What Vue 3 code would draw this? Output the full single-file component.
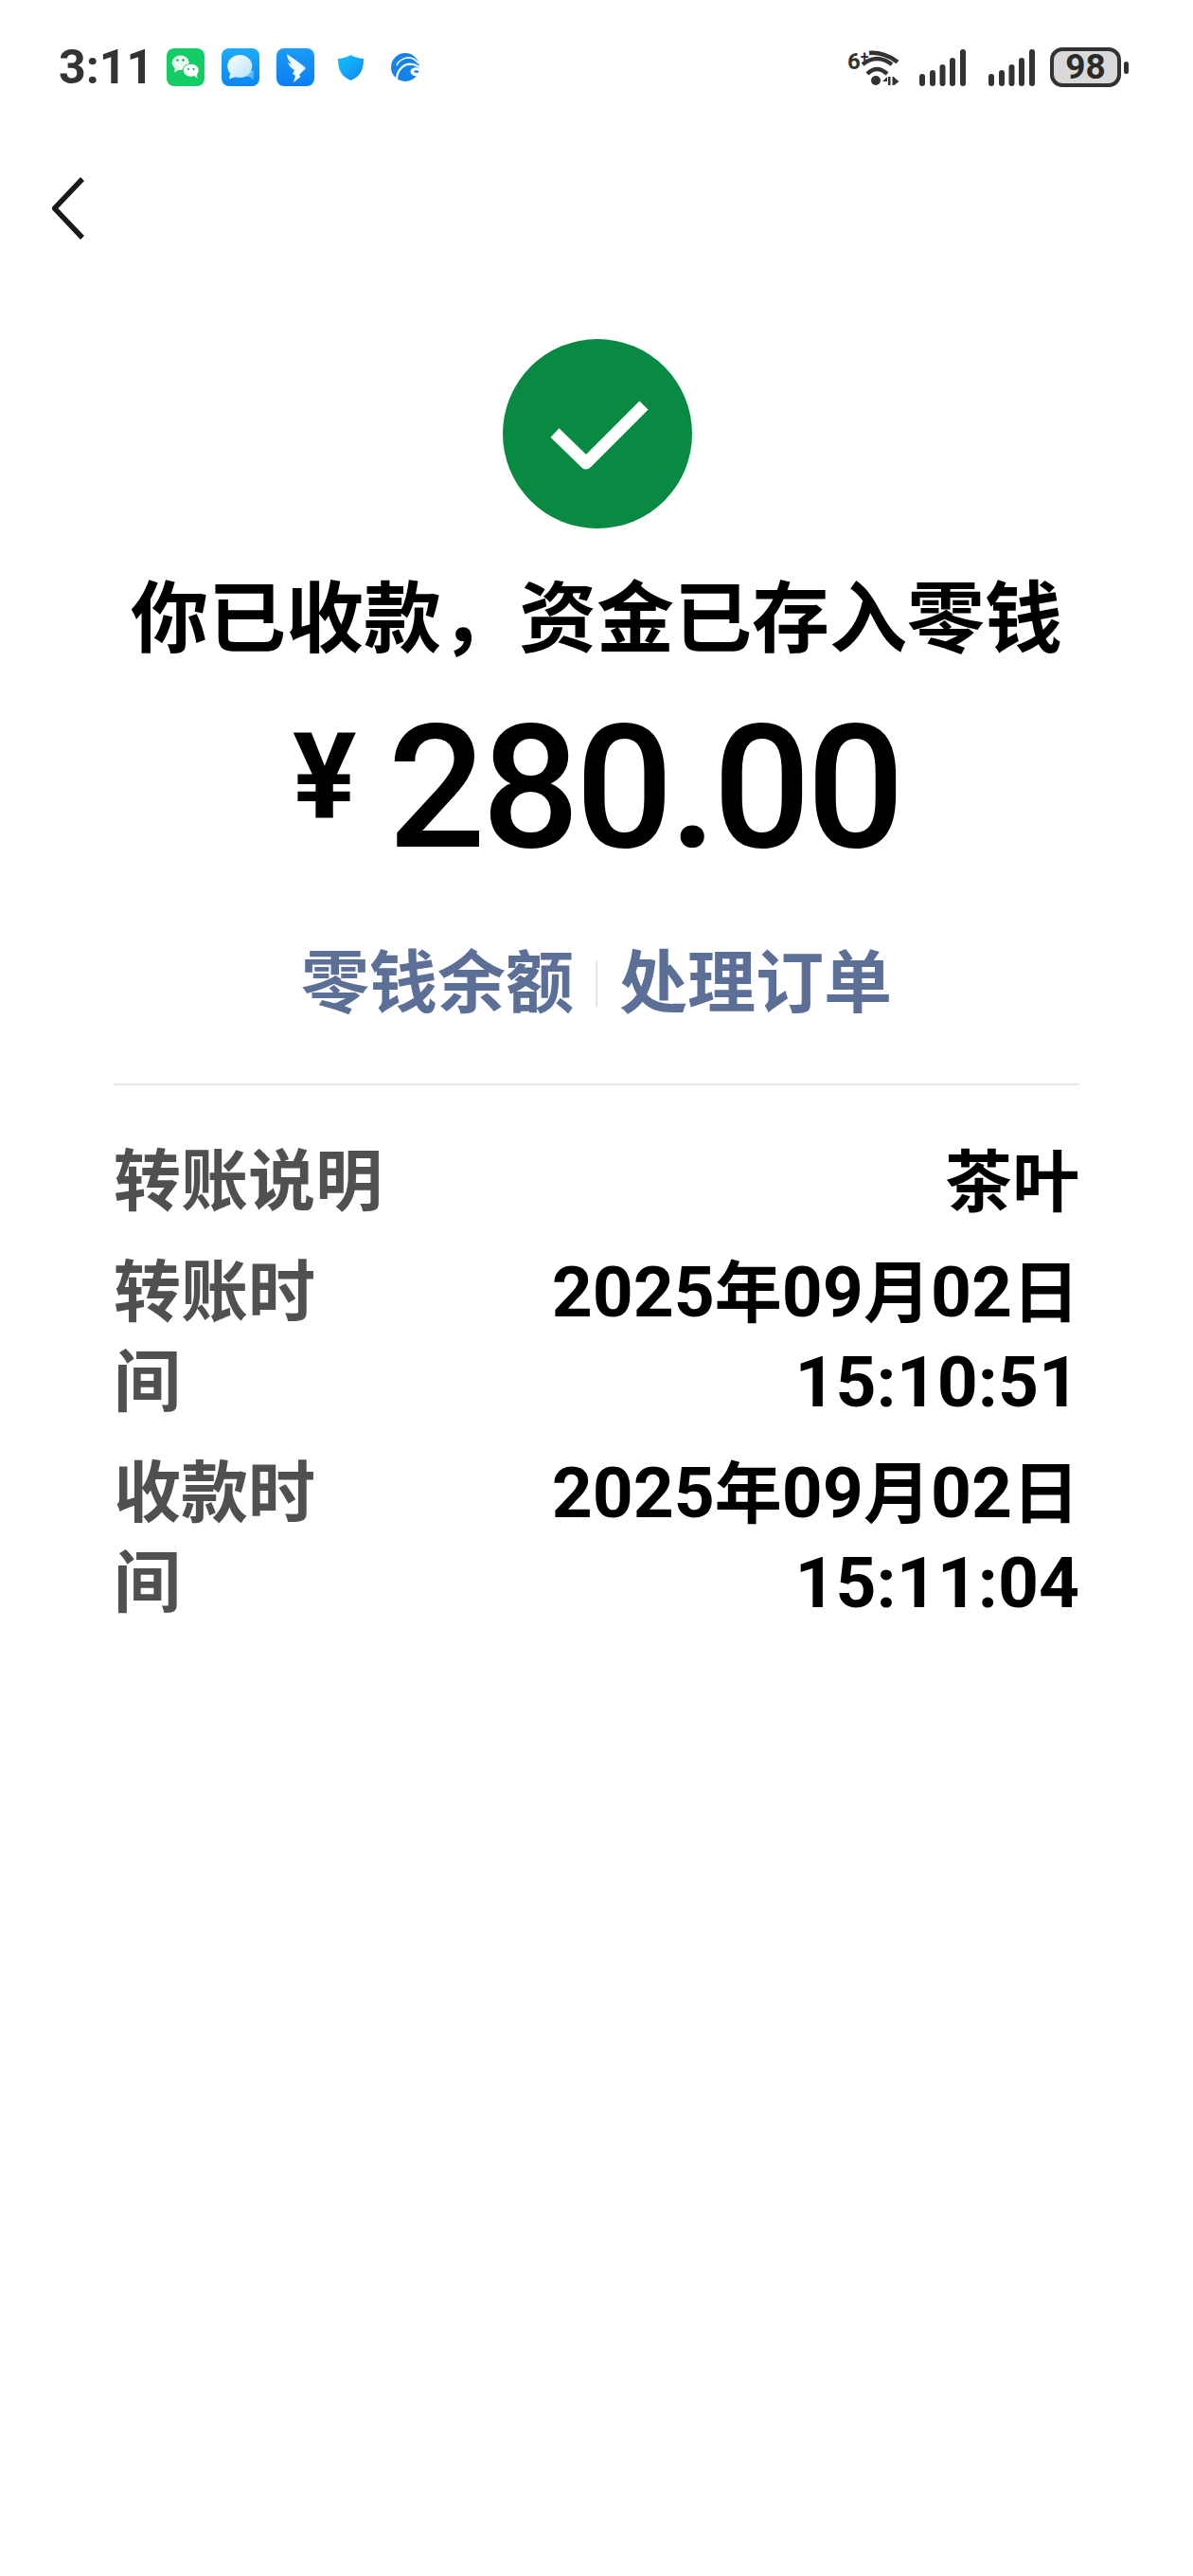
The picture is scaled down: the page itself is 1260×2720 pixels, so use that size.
<script setup>
// digits sit in a larger size than the CJK glyphs on the value side
const splitLine = (line) => line.split(/([\u4e00-\u9fff]+)/).filter(Boolean).map((text) => ({
  text,
  cjk: /[\u4e00-\u9fff]/.test(text)
}))

const rows = [
  { label: '转账说明', lines: ['茶叶'] },
  { label: '转账时\n间', lines: ['2025年09月02日', '15:10:51'] },
  { label: '收款时\n间', lines: ['2025年09月02日', '15:11:04'] }
].map((row) => ({ ...row, lines: row.lines.map(splitLine) }))
</script>

<template>
  <div class="page">
    <div class="status-bar">
      <span class="time">3:11</span>
      <div class="app-icons">
        <svg class="app-icon" viewBox="0 0 40 40">
          <rect width="40" height="40" rx="8" fill="#14cc66" />
          <ellipse cx="14.700" cy="15.300" rx="9" ry="7.800" fill="#e8fbf0" />
          <path d="M9 20l-1 5.500 5.500-3z" fill="#e8fbf0" />
          <ellipse cx="25.700" cy="23.300" rx="8.500" ry="7" fill="#fff" stroke="#14cc66" stroke-width="1" />
          <path d="M29 28.500l3.500 3.500-.5-6z" fill="#fff" />
          <circle cx="11.500" cy="12.500" r="1.200" fill="#12a857" />
          <circle cx="17.500" cy="12.500" r="1.200" fill="#12a857" />
          <circle cx="23" cy="22" r="1.100" fill="#12a857" />
          <circle cx="28.500" cy="22" r="1.100" fill="#12a857" />
        </svg>
        <svg class="app-icon" viewBox="0 0 40 40">
          <defs>
            <linearGradient id="msgBg" x1="0" y1="0" x2="0" y2="1">
              <stop offset="0" stop-color="#1cabf8" />
              <stop offset="1" stop-color="#0b86f5" />
            </linearGradient>
            <linearGradient id="msgBubble" x1="0" y1="0" x2="1" y2="1">
              <stop offset="0" stop-color="#ffffff" />
              <stop offset="1" stop-color="#b4e2fb" />
            </linearGradient>
          </defs>
          <rect width="40" height="40" rx="8" fill="url(#msgBg)" />
          <path d="M26 23l8 1 -.500 9-4-3-7 0z" fill="#5cc0f7" />
          <ellipse cx="19.300" cy="19" rx="13" ry="12" fill="url(#msgBubble)" />
          <path d="M9 26l-1 6.500 7-2.500z" fill="#d8f0fc" />
        </svg>
        <svg class="app-icon" viewBox="0 0 40 40">
          <defs>
            <linearGradient id="wingBg" x1="0" y1="0" x2="0" y2="1">
              <stop offset="0" stop-color="#1b9bf6" />
              <stop offset="1" stop-color="#0a7ff5" />
            </linearGradient>
          </defs>
          <rect width="40" height="40" rx="8" fill="url(#wingBg)" />
          <path d="M11 6C18 11 26 16 31 21L24 28L25.500 30L18 36L20 29L17 27L19 23C15 21 13 18 12 15L16 17C13 13 11 10 11 6z" fill="#f2faff" />
        </svg>
        <svg class="shield" viewBox="0 0 27 27">
          <defs>
            <linearGradient id="shieldFill" x1="0" y1="0" x2="1" y2="1">
              <stop offset="0" stop-color="#12c3fb" />
              <stop offset="1" stop-color="#1487f2" />
            </linearGradient>
          </defs>
          <path d="M13.500 0c3 2 8 3.500 13.500 4 0 10-2 18-13.500 23C2 22 0 14 0 4c5.500-.5 10.500-2 13.500-4z" fill="url(#shieldFill)" />
        </svg>
        <svg class="globe" viewBox="0 0 30 30">
          <circle cx="15" cy="15" r="15" fill="#1583e8" />
          <path d="M6 13C9 6 21 0 29 11" fill="none" stroke="#fff" stroke-width="1.600" />
          <path d="M6 28C6 18 14 10 23 12c3 .6 5 2 7 3" fill="none" stroke="#fff" stroke-width="2.200" />
          <path d="M30 16.500C27 14.500 22 15 20.500 19c0 4 4 6.500 9 4.500l.500-3c-2 .8-5 .5-6-1 1-1.500 4-1.500 6-.5z" fill="#fff" />
        </svg>
      </div>
      <div class="status-right">
        <div class="wifi">
          <span class="wifi-tag">6<small>+</small></span>
          <svg viewBox="0 0 56 42" class="wifi-icon">
            <path d="M23 6C33 5 45 9 53 15.500" fill="none" stroke="#333" stroke-width="4.500" />
            <path d="M16 18Q31 6 47 18" fill="none" stroke="#333" stroke-width="4.500" />
            <path d="M21 28Q31 18 42 28" fill="none" stroke="#333" stroke-width="4.500" />
            <circle cx="30" cy="35" r="5" fill="#333" />
            <path d="M37 36l5-5v5zM43 31h2.500v9H43zM47.500 31h2v9h-2zM49.500 32l5 4-5 4z" fill="#333" />
          </svg>
        </div>
        <svg class="signal" v-for="n in 2" :key="n" viewBox="0 0 49 39">
          <rect x="0" y="26" width="6" height="13" rx="3" fill="#333" />
          <rect x="11" y="22" width="6" height="17" rx="3" fill="#333" />
          <rect x="21.500" y="16" width="6" height="23" rx="3" fill="#333" />
          <rect x="32" y="9" width="6" height="30" rx="3" fill="#333" />
          <rect x="43" y="0" width="6" height="39" rx="3" fill="#333" />
        </svg>
        <div class="battery">
          <div class="battery-body">98</div>
          <div class="battery-nub"></div>
        </div>
      </div>
    </div>

    <div class="nav">
      <svg class="back" viewBox="0 0 34 66">
        <path d="M32 2L2.500 33 32 64" fill="none" stroke="#1a1a1a" stroke-width="5.500" />
      </svg>
    </div>

    <div class="result">
      <div class="success-icon">
        <svg viewBox="0 0 200 200" class="check">
          <path d="M55 99l33 32 61-61" fill="none" stroke="#fff" stroke-width="13" stroke-linejoin="round" />
        </svg>
      </div>
      <h1 class="title">你已收款，资金已存入零钱</h1>
      <div class="amount"><span class="currency">¥</span><span class="number">280.00</span></div>
      <div class="links">
        <span>零钱余额</span>
        <i class="link-divider"></i>
        <span>处理订单</span>
      </div>
    </div>

    <div class="details">
      <div class="row" v-for="row in rows" :key="row.label">
        <div class="label">{{ row.label }}</div>
        <div class="value">
          <div v-for="(line, i) in row.lines" :key="i">
            <span v-for="part in line" :key="part.text" :class="{ cjk: part.cjk }">{{ part.text }}</span>
          </div>
        </div>
      </div>
    </div>
  </div>
</template>

<style>
html, body {
  background: #fff;
}
</style>

<style scoped>
.page {
  width: 1260px;
  height: 2720px;
  background: #fff;
  font-family: Roboto, "Noto Sans CJK SC", sans-serif;
  color: #000;
  overflow: hidden;
}

.status-bar {
  height: 142px;
  display: flex;
  align-items: center;
  padding: 0 68px 0 62px;
}

.time {
  width: 114px;
  font-size: 50px;
  font-weight: 700;
  color: #333;
}

.app-icons {
  display: flex;
  align-items: center;
}

.app-icon {
  width: 40px;
  height: 40px;
  margin-right: 18px;
}

.shield {
  width: 27px;
  height: 27px;
  margin: 0 29px 0 7px;
}

.globe {
  width: 30px;
  height: 30px;
}

.status-right {
  margin-left: auto;
  display: flex;
  align-items: center;
}

.wifi {
  position: relative;
  width: 56px;
  height: 42px;
  margin-right: 20px;
}

.wifi-tag {
  position: absolute;
  left: 0;
  top: -1px;
  font-size: 24px;
  font-weight: 700;
  line-height: 24px;
  color: #333;
}

.wifi-tag small {
  font-size: 16px;
  vertical-align: 7px;
}

.wifi-icon {
  display: block;
  width: 56px;
  height: 42px;
}

.signal {
  width: 49px;
  height: 39px;
  margin-right: 24px;
}

.signal + .battery {
  margin-left: -8px;
}

.battery {
  display: flex;
  align-items: center;
}

.battery-body {
  width: 75px;
  height: 42px;
  box-sizing: border-box;
  border: 4px solid #333;
  border-radius: 13px;
  background: #d9d9d9;
  color: #2a2a2a;
  font-size: 37px;
  font-weight: 700;
  line-height: 34px;
  text-align: center;
}

.battery-nub {
  width: 5px;
  height: 13px;
  margin-left: 3px;
  border-radius: 3px;
  background: #333;
}

.nav {
  height: 156px;
  display: flex;
  align-items: center;
  padding-left: 55px;
}

.back {
  width: 34px;
  height: 66px;
}

.result {
  display: flex;
  flex-direction: column;
  align-items: center;
  padding-top: 60px;
}

.success-icon {
  width: 200px;
  height: 200px;
  margin-left: 2px;
  border-radius: 50%;
  background: #088a43;
}

.check {
  width: 200px;
  height: 200px;
  display: block;
}

.title {
  margin: 46px 0 0;
  font-size: 82px;
  font-weight: 700;
  line-height: 100px;
  white-space: nowrap;
}

.amount {
  margin-top: 38px;
  display: flex;
  align-items: flex-start;
  height: 180px;
  line-height: 180px;
}

.currency {
  font-size: 126px;
  font-weight: 700;
  line-height: 156px;
  margin-right: 33px;
}

.number {
  font-size: 182px;
  font-weight: 500;
  letter-spacing: -4.400px;
}

.links {
  margin-top: 72px;
  display: flex;
  align-items: center;
  gap: 23px;
  font-size: 72px;
  font-weight: 700;
  line-height: 90px;
  color: #5c6f97;
}

.link-divider {
  width: 2px;
  height: 48px;
  background: #e4e6ea;
}

.details {
  margin: 60px 120px 0;
  padding-top: 54px;
  border-top: 2px solid #e8e8e8;
  display: flex;
  flex-direction: column;
  gap: 22px;
}

.row {
  display: flex;
  justify-content: space-between;
  font-size: 71px;
  font-weight: 700;
  line-height: 95px;
}

.label {
  color: #505050;
  white-space: pre-line;
}

.value {
  color: #000;
  font-size: 75px;
  text-align: right;
}

.value span {
  line-height: 1;
}

.cjk {
  font-size: 71px;
}
</style>
